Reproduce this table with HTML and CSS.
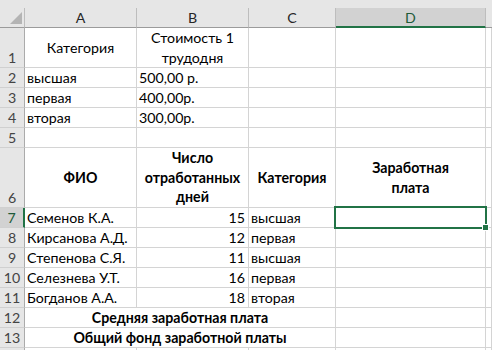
FILE: index.html
```html
<!doctype html>
<html lang="ru">
<head>
  <meta charset="utf-8">
  <title>Заработная плата</title>
  <link rel="stylesheet" href="styles.css">
</head>
<body>
  <div class="strip"></div>
  <div class="sheet">
    <!-- заголовки столбцов -->
    <div class="ch corner"><span class="tri"></span></div>
    <div class="ch">A</div>
    <div class="ch">B</div>
    <div class="ch">C</div>
    <div class="ch on">D</div>
    <div class="ch last"></div>

    <div class="rh">1</div>
    <div class="mid">Категория</div>
    <div class="mid">Стоимость 1<br>трудодня</div>
    <div></div><div></div><div></div>

    <div class="rh">2</div>
    <div>высшая</div>
    <div>500,00 р.</div>
    <div></div><div></div><div></div>

    <div class="rh">3</div>
    <div>первая</div>
    <div>400,00р.</div>
    <div></div><div></div><div></div>

    <div class="rh">4</div>
    <div>вторая</div>
    <div>300,00р.</div>
    <div></div><div></div><div></div>

    <div class="rh">5</div>
    <div></div><div></div><div></div><div></div><div></div>

    <div class="rh">6</div>
    <div class="mid b">ФИО</div>
    <div class="mid b">Число<br>отработанных<br>дней</div>
    <div class="mid b">Категория</div>
    <div class="mid b">Заработная<br>плата</div>
    <div></div>

    <div class="rh on">7</div>
    <div>Семенов К.А.</div>
    <div class="num">15</div>
    <div>высшая</div>
    <div class="active"><span class="sel"></span><span class="handle"></span></div>
    <div></div>

    <div class="rh">8</div>
    <div>Кирсанова А.Д.</div>
    <div class="num">12</div>
    <div>первая</div>
    <div></div><div></div>

    <div class="rh">9</div>
    <div>Степенова С.Я.</div>
    <div class="num">11</div>
    <div>высшая</div>
    <div></div><div></div>

    <div class="rh">10</div>
    <div>Селезнева У.Т.</div>
    <div class="num">16</div>
    <div>первая</div>
    <div></div><div></div>

    <div class="rh">11</div>
    <div>Богданов А.А.</div>
    <div class="num">18</div>
    <div>вторая</div>
    <div></div><div></div>

    <div class="rh">12</div>
    <div class="merged b">Средняя заработная плата</div>
    <div></div><div></div>

    <div class="rh">13</div>
    <div class="merged b">Общий фонд заработной платы</div>
    <div></div><div></div>

    <!-- строка 14 видна лишь краем -->
    <div class="rh"></div>
    <div></div><div></div><div></div><div></div><div></div>
  </div>
</body>
</html>
```

FILE: styles.css
```css
body {
  margin: 0;
  background: #fff;
  font-family: Lato, "Liberation Sans", Arial, sans-serif;
  font-size: 14.2px;
  color: #000;
  overflow: hidden;
}

.strip {
  height: 8px;
  background: #e6e6e6;
}

.sheet {
  display: grid;
  grid-template-columns: 25px 112px 112px 87px 150px 6px;
  grid-template-rows: 20px 40px 20px 20px 20px 20px 60px repeat(8, 20px);
}

.sheet > div {
  box-sizing: border-box;
  min-width: 0;
  display: flex;
  align-items: flex-end;
  padding: 0 2px;
  line-height: 19px;
  white-space: nowrap;
  border-right: 1px solid #d4d4d4;
  border-bottom: 1px solid #d4d4d4;
}

/* заголовки столбцов */
.sheet > .ch {
  justify-content: center;
  align-items: center;
  background: #e6e6e6;
  color: #262626;
  border-right-color: #bdbdbd;
  border-bottom-color: #9b9b9b;
}

.sheet > .ch.last {
  border-right: 0;
}

.sheet > .ch.on {
  background: #d2d2d2;
  color: #1e5b38;
  border-bottom: 2px solid #217346;
}

.sheet > .corner {
  justify-content: flex-end;
  align-items: flex-end;
  padding: 0 2px 3px 0;
}

.tri {
  width: 0;
  height: 0;
  border-left: 12px solid transparent;
  border-bottom: 12px solid #b4b4b4;
}

/* номера строк */
.sheet > .rh {
  justify-content: center;
  padding: 0;
  background: #e6e6e6;
  color: #444;
  border-right-color: #ababab;
  border-bottom-color: #d0d0d0;
}

.sheet > .rh.on {
  background: #d2d2d2;
  color: #1e5b38;
  border-right: 2px solid #217346;
}

.sheet > .mid {
  justify-content: center;
  align-items: center;
  text-align: center;
  line-height: 19.5px;
}

.sheet > .num {
  justify-content: flex-end;
  padding-right: 3px;
}

.sheet > .merged {
  grid-column: span 3;
  justify-content: center;
}

.b {
  font-weight: bold;
}

/* выделенная ячейка D7 */
.sheet > .active {
  position: relative;
}

.sel {
  position: absolute;
  left: -2px;
  top: -2px;
  width: 153px;
  height: 23px;
  box-sizing: border-box;
  border: 2px solid #217346;
}

.handle {
  position: absolute;
  left: 146px;
  top: 16px;
  width: 7px;
  height: 7px;
  box-sizing: border-box;
  background: #217346;
  border: 1px solid #fff;
}
```
